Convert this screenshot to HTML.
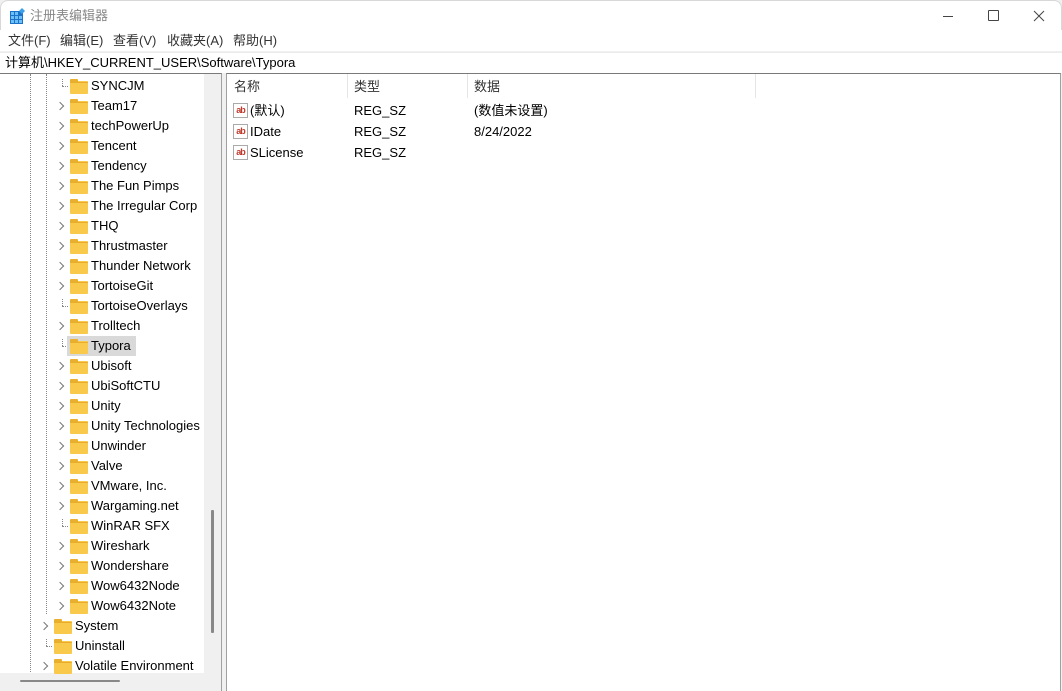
<!DOCTYPE html>
<html><head><meta charset="utf-8"><style>
*{margin:0;padding:0;box-sizing:border-box}
body{width:1062px;height:691px;background:#f0f0f0;font-family:"Liberation Sans","Noto Sans CJK SC",sans-serif;font-size:13px;color:#000;position:relative;overflow:hidden}
.abs{position:absolute}
span.abs{line-height:20px;white-space:nowrap}
#title{left:0;top:0;width:1062px;height:30px;background:#fff;border:1px solid #d8d8d8;border-bottom:none;border-radius:8px 8px 0 0}
#menu{left:0;top:30px;width:1062px;height:21px;background:#fff}
#menu span{position:absolute;top:1px;color:#333;line-height:20px}
#addr{left:0;top:52px;width:1062px;height:21px;background:#fff;border-top:1px solid #ececec}
#tree{left:0;top:73px;width:222px;height:618px;background:#fff;border-top:1px solid #7a7a7a;border-right:1px solid #a0a0a0;overflow:hidden}
#list{left:226px;top:73px;width:835px;height:618px;background:#fff;border-top:1px solid #7a7a7a;border-left:1px solid #a0a0a0;border-right:1px solid #a0a0a0}
.it{position:absolute;height:20px;line-height:20px;white-space:nowrap}
.fold{position:absolute;width:18px;height:13px;background:#f8c94a;border-radius:1px}
.fold:before{content:"";position:absolute;left:0;top:-2px;width:8px;height:3px;background:#e9b030;border-radius:1px 1px 0 0}
.fold:after{content:"";position:absolute;left:0;top:1px;width:18px;height:1px;background:#e8ad2a}
.chev{position:absolute;width:6px;height:6px;border-right:1px solid #777;border-top:1px solid #777;transform:rotate(45deg)}
.dotv{position:absolute;border-left:1px dotted #888;width:0}
.doth{position:absolute;border-top:1px dotted #888;height:0;width:6px}
.hd{position:absolute;top:0;height:24px;line-height:26px;color:#333;border-right:1px solid #e5e5e5}
.ab{position:absolute;width:15px;height:15px;border:1px solid #aaa;background:#fff;font-size:9px;font-weight:bold;color:#c0392b;line-height:12px;text-align:center;letter-spacing:-1px}
</style></head><body>
<div id="title" class="abs">
 <svg class="abs" style="left:9px;top:7px" width="16" height="16" viewBox="0 0 16 16">
  <rect x="0" y="3" width="13" height="13" fill="#1a73c8"/>
  <g fill="#6cc0f5"><rect x="1" y="4" width="3" height="3"/><rect x="5" y="4" width="3" height="3"/><rect x="1" y="8" width="3" height="3"/><rect x="5" y="8" width="3" height="3"/><rect x="9" y="8" width="3" height="3"/><rect x="1" y="12" width="3" height="3"/><rect x="5" y="12" width="3" height="3"/><rect x="9" y="12" width="3" height="3"/></g>
  <path d="M12 0 L15 3 L12 6 L9 3Z" fill="#3aa0e8"/>
 </svg>
 <span class="abs" style="left:29px;top:5px;color:#888;font-size:13px">注册表编辑器</span>
 <div class="abs" style="left:942px;top:15px;width:10px;border-top:1px solid #444"></div>
 <div class="abs" style="left:987px;top:9px;width:11px;height:11px;border:1px solid #444;border-radius:1px"></div>
 <svg class="abs" style="left:1032px;top:9px" width="12" height="12"><path d="M1 1L11 11M11 1L1 11" stroke="#444" stroke-width="1"/></svg>
</div>
<div id="menu" class="abs">
 <span style="left:8px">文件(F)</span><span style="left:60px">编辑(E)</span><span style="left:113px">查看(V)</span><span style="left:167px">收藏夹(A)</span><span style="left:233px">帮助(H)</span>
</div>
<div id="addr" class="abs"><span class="abs" style="left:5px;top:0px">计算机\HKEY_CURRENT_USER\Software\Typora</span></div>
<div id="tree" class="abs">
 <div class="dotv" style="left:30px;top:0;height:600px"></div>
 <div class="dotv" style="left:46px;top:0;height:540px"></div>
 <div class="abs" style="left:204px;top:0;width:17px;height:618px;background:#f0f0f0"></div>
 <div class="abs" style="left:0;top:599px;width:204px;height:19px;background:#f0f0f0"></div>
 <div class="abs" style="left:211px;top:436px;width:3px;height:123px;background:#888;border-radius:1px"></div>
 <div class="abs" style="left:20px;top:606px;width:100px;height:2px;background:#888;border-radius:1px"></div>
 <div id="items"></div>
</div>
<div id="list" class="abs">
 <div class="hd" style="left:0;width:121px;padding-left:7px">名称</div>
 <div class="hd" style="left:121px;width:120px;padding-left:6px">类型</div>
 <div class="hd" style="left:241px;width:288px;padding-left:6px">数据</div>
 <div class="ab" style="left:6px;top:29px">ab</div><span class="abs" style="left:23px;top:27px">(默认)</span><span class="abs" style="left:127px;top:27px">REG_SZ</span><span class="abs" style="left:247px;top:27px">(数值未设置)</span>
 <div class="ab" style="left:6px;top:50px">ab</div><span class="abs" style="left:23px;top:48px">IDate</span><span class="abs" style="left:127px;top:48px">REG_SZ</span><span class="abs" style="left:247px;top:48px">8/24/2022</span>
 <div class="ab" style="left:6px;top:71px">ab</div><span class="abs" style="left:23px;top:69px">SLicense</span><span class="abs" style="left:127px;top:69px">REG_SZ</span>
</div>
<script>
var L3=[["SYNCJM",0],["Team17",1],["techPowerUp",1],["Tencent",1],["Tendency",1],["The Fun Pimps",1],["The Irregular Corp",1],["THQ",1],["Thrustmaster",1],["Thunder Network",1],["TortoiseGit",1],["TortoiseOverlays",0],["Trolltech",1],["Typora",0],["Ubisoft",1],["UbiSoftCTU",1],["Unity",1],["Unity Technologies",1],["Unwinder",1],["Valve",1],["VMware, Inc.",1],["Wargaming.net",1],["WinRAR SFX",0],["Wireshark",1],["Wondershare",1],["Wow6432Node",1],["Wow6432Note",1]];
var L2=[["System",1],["Uninstall",0],["Volatile Environment",1]];
var h="";
function add(n,c,y,lvl){
 var fx=lvl==3?70:54, tx=lvl==3?91:75, cx=lvl==3?57:41;
 if(c) h+='<div class="chev" style="left:'+cx+'px;top:'+(y+7)+'px"></div>';
 else {var dx=lvl==3?62:46; h+='<div class="dotv" style="left:'+dx+'px;top:'+(y+3)+'px;height:7px"></div><div class="doth" style="left:'+dx+'px;top:'+(y+10)+'px"></div>';}
 if(n=="Typora") h+='<div class="abs" style="left:67px;top:'+(y)+'px;width:69px;height:20px;background:#d9d9d9"></div>';
 h+='<div class="fold" style="left:'+fx+'px;top:'+(y+5)+'px"></div>';
 h+='<div class="it" style="left:'+tx+'px;top:'+y+'px">'+n+'</div>';
}
var y=2;
L3.forEach(function(a){add(a[0],a[1],y,3);y+=20;});
L2.forEach(function(a){add(a[0],a[1],y,2);y+=20;});
document.getElementById("items").innerHTML=h;
</script>
</body></html>
